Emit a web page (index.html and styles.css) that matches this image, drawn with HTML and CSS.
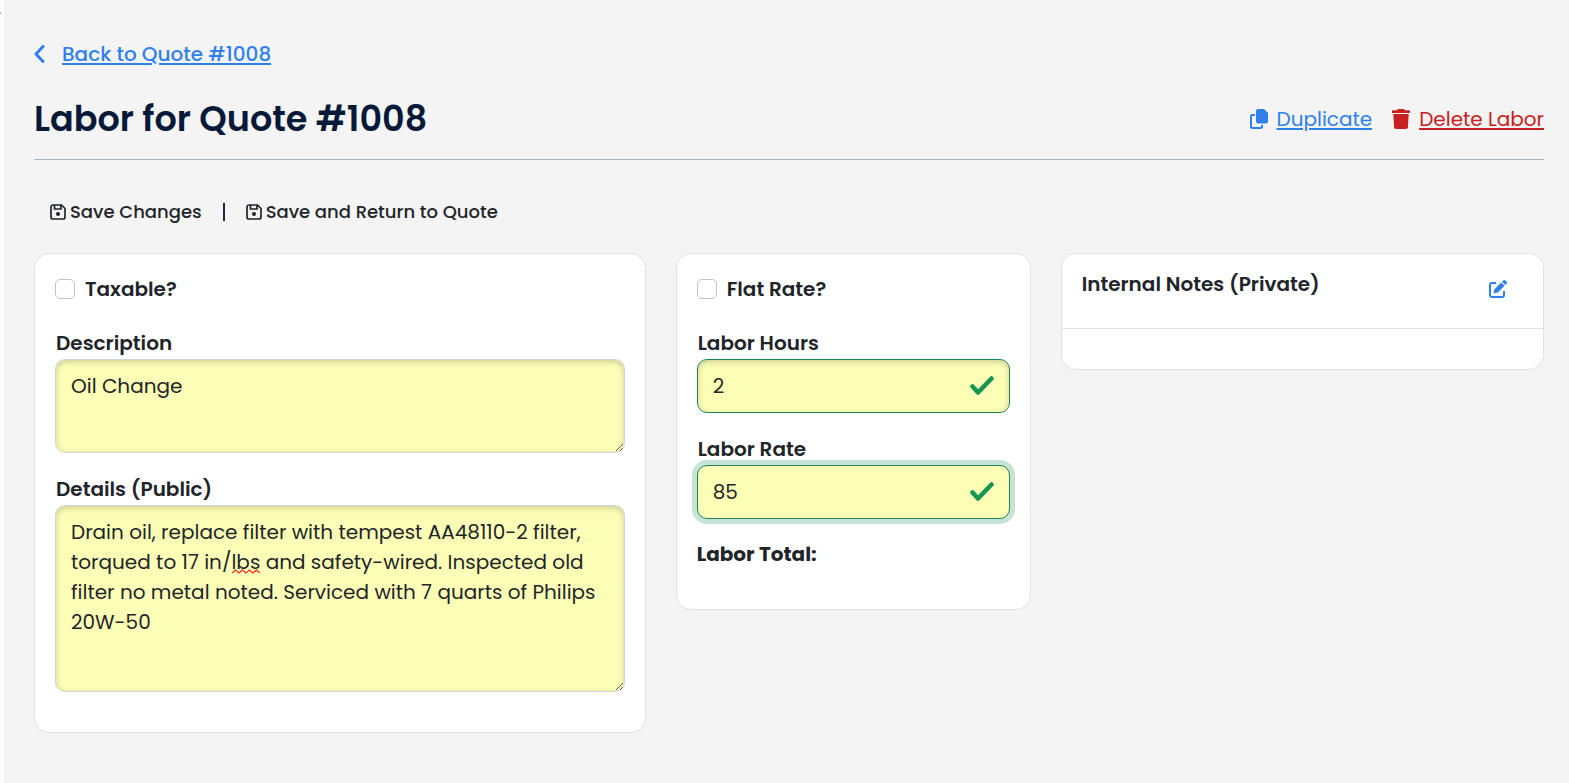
FILE: index.html
```html
<!DOCTYPE html>
<html lang="en">
<head>
    <meta charset="UTF-8">
    <meta name="viewport" content="width=device-width, initial-scale=1.0">
    <title>Labor for Quote #1008</title>
    <link rel="stylesheet" href="styles.css">
</head>
<body>
    <div class="page">
        <div class="back">
            <svg class="back-icon" viewBox="0 0 12 18"><path d="M9 1.500L2 9L9 16.500"/></svg>
            <a href="#">Back to Quote #1008</a>
        </div>

        <div class="header">
            <h1>Labor for Quote #1008</h1>
            <div class="header-actions">
                <a href="#" class="action">
                    <svg viewBox="0 0 18 20">
                        <path d="M8 0h6l4 4v8.500a2 2 0 0 1-2 2H8a2 2 0 0 1-2-2V2a2 2 0 0 1 2-2z"/>
                        <path class="outline" d="M5 6H2.500A1.500 1.500 0 0 0 1 7.500v10A1.500 1.500 0 0 0 2.500 19h8a1.500 1.500 0 0 0 1.500-1.500V16"/>
                    </svg>
                    <span>Duplicate</span>
                </a>
                <a href="#" class="action action-delete">
                    <svg viewBox="0 0 18 20">
                        <path d="M6 0h6l1 1.300h4a1 1 0 0 1 1 1V4H0V2.300a1 1 0 0 1 1-1h4z"/>
                        <path d="M1.300 5h15.400l-.8 13.200A2 2 0 0 1 14 20H4a2 2 0 0 1-1.900-1.800z"/>
                    </svg>
                    <span>Delete Labor</span>
                </a>
            </div>
        </div>

        <div class="toolbar">
            <button type="button">
                <svg viewBox="0 0 16 16">
                    <path d="M3 1h8.500L15 4.500V13a2 2 0 0 1-2 2H3a2 2 0 0 1-2-2V3a2 2 0 0 1 2-2z"/>
                    <path d="M4.500 1v4h6.500V1"/>
                    <circle cx="8" cy="10" r="2"/>
                </svg>
                Save Changes
            </button>
            <span class="divider"></span>
            <button type="button">
                <svg viewBox="0 0 16 16">
                    <path d="M3 1h8.500L15 4.500V13a2 2 0 0 1-2 2H3a2 2 0 0 1-2-2V3a2 2 0 0 1 2-2z"/>
                    <path d="M4.500 1v4h6.500V1"/>
                    <circle cx="8" cy="10" r="2"/>
                </svg>
                Save and Return to Quote
            </button>
        </div>

        <form class="columns">
            <div class="card card-main">
                <div class="check-row">
                    <input type="checkbox" id="taxable">
                    <label for="taxable">Taxable?</label>
                </div>
                <div class="field">
                    <label for="description">Description</label>
                    <textarea id="description" class="short">Oil Change</textarea>
                </div>
                <div class="field">
                    <label for="details">Details (Public)</label>
                    <textarea id="details" class="tall">Drain oil, replace filter with tempest AA48110-2 filter, torqued to 17 in/lbs and safety-wired. Inspected old filter no metal noted. Serviced with 7 quarts of Philips 20W-50</textarea>
                    <svg class="misspelled" viewBox="0 0 28 5"><path d="M0 4l3.500-3 3.500 3 3.500-3 3.500 3 3.500-3 3.500 3 3.500-3 3.500 3"/></svg>
                </div>
            </div>

            <div class="card card-rate">
                <div class="check-row">
                    <input type="checkbox" id="flatRate">
                    <label for="flatRate">Flat Rate?</label>
                </div>
                <div class="field">
                    <label for="hours">Labor Hours</label>
                    <input type="text" id="hours" value="2">
                    <svg class="valid" viewBox="0 0 24 20"><path d="M2.500 10.500L8 16.500L21.500 2.500"/></svg>
                </div>
                <div class="field">
                    <label for="rate">Labor Rate</label>
                    <input type="text" id="rate" class="focused" value="85">
                    <svg class="valid" viewBox="0 0 24 20"><path d="M2.500 10.500L8 16.500L21.500 2.500"/></svg>
                </div>
                <p class="total">Labor Total:</p>
            </div>

            <div class="card card-notes">
                <div class="notes-header">
                    <h2>Internal Notes (Private)</h2>
                    <button type="button" aria-label="Edit notes">
                        <svg viewBox="0 0 18 18">
                            <path class="outline" d="M7 3H3a2 2 0 0 0-2 2v10a2 2 0 0 0 2 2h10a2 2 0 0 0 2-2v-4"/>
                            <path d="M12.200 2.500l3.300 3.300-6.700 6.700-4.300 1 1-4.300z"/>
                            <path d="M13 1.700l1-1a2 2 0 0 1 2.700 0l.6.6a2 2 0 0 1 0 2.700l-1 1z"/>
                        </svg>
                    </button>
                </div>
                <div class="notes-body"></div>
            </div>
        </form>
    </div>
</body>
</html>
```
FILE: styles.css
```css
* {
    box-sizing: border-box;
}
body {
    margin: 0;
    background-color: #f4f4f4;
    color: #212529;
    font-family: Poppins, Inter, sans-serif;
    font-size: 20px;
    line-height: 30px;
}
.page {
    min-height: 100vh;
    padding: 39px 25px 30px 30px;
    border-left: 4px solid #fcfcfc;
}
/* end of the sidebar rule */
.page::before {
    content: "";
    position: absolute;
    top: 12px;
    left: 0;
    width: 1px;
    height: 2px;
    background-color: #b5b5b5;
}
a {
    color: #2f80ed;
    text-decoration-thickness: 2px;
    text-underline-offset: 2px;
}
h1, h2, p {
    margin: 0;
}
button {
    padding: 0;
    border: none;
    background: none;
    color: inherit;
    font: inherit;
    cursor: pointer;
}
.back {
    display: flex;
    align-items: center;
    gap: 16px;
}
.back a {
    font-weight: 500;
}
.back-icon {
    width: 12px;
    height: 18px;
    fill: none;
    stroke: #2f80ed;
    stroke-width: 3;
    stroke-linecap: round;
    stroke-linejoin: round;
}
.header {
    display: flex;
    justify-content: space-between;
    align-items: center;
    margin-top: 20px;
    padding-bottom: 11px;
    border-bottom: 1px solid #a7b3c9;
}
h1 {
    color: #061938;
    font-size: 35px;
    font-weight: 600;
    line-height: 59px;
}
.header-actions {
    display: flex;
    gap: 20px;
}
.action {
    display: flex;
    align-items: center;
    gap: 9px;
    text-decoration: none;
}
.action span {
    text-decoration: underline;
    text-decoration-thickness: 2px;
}
.action svg {
    width: 18px;
    height: 20px;
    fill: #2f80ed;
}
.action .outline {
    fill: none;
    stroke: #2f80ed;
    stroke-width: 2;
}
.action-delete {
    color: #c82020;
}
.action-delete svg {
    fill: #c82020;
}
.toolbar {
    display: flex;
    align-items: center;
    margin: 37px 0 26px;
    padding-left: 16px;
    font-size: 18px;
    font-weight: 500;
}
.toolbar button {
    display: flex;
    align-items: center;
    gap: 4px;
}
.toolbar svg {
    width: 16px;
    height: 16px;
    fill: none;
    stroke: #212529;
    stroke-width: 1.7;
}
.toolbar circle {
    fill: #212529;
    stroke: none;
}
.divider {
    width: 2px;
    height: 18px;
    margin: 0 21px;
    background-color: #1e2a55;
}
.columns {
    display: grid;
    grid-template-columns: repeat(12, 1fr);
    align-items: start;
    gap: 30px;
}
.card {
    padding: 20px;
    background-color: #fff;
    border: 1px solid #dee2e6;
    border-radius: 15px;
}
.card-main {
    grid-column: span 5;
}
.card-rate {
    grid-column: span 3;
}
.card-notes {
    grid-column: span 4;
    padding: 0;
}
label {
    font-weight: 600;
}
.check-row {
    display: flex;
    align-items: center;
    gap: 10px;
    margin-bottom: 23px;
}
.check-row input {
    appearance: none;
    width: 20px;
    height: 20px;
    margin: 0;
    background-color: #fff;
    border: 1px solid #bfc4ca;
    border-radius: 5px;
}
.field {
    position: relative;
    margin-bottom: 20px;
}
.field label {
    display: block;
    padding: 1px 0 1px 1px;
}
.field textarea,
.field input {
    display: block;
    width: 100%;
    padding: 11px 15px;
    background-color: #fdffb6;
    border: 1px solid #ced4da;
    border-radius: 10px;
    box-shadow: inset 0 2px 6px rgba(0, 0, 0, 0.2);
    color: #212529;
    font: inherit;
    outline: none;
}
.field input {
    height: 54px;
    border-color: #198754;
}
.field .focused {
    box-shadow: 0 0 0 5px #c5e4d3;
}
.field .short {
    height: 94px;
}
.field .tall {
    height: 187px;
}
.valid {
    position: absolute;
    right: 16px;
    bottom: 17px;
    width: 24px;
    height: 20px;
    fill: none;
    stroke: #169552;
    stroke-width: 4.5;
    stroke-linecap: round;
    stroke-linejoin: round;
}
.misspelled {
    position: absolute;
    top: 96px;
    left: 177px;
    width: 28px;
    height: 5px;
    fill: none;
    stroke: #ff2a20;
    stroke-width: 1.3;
}
.total {
    margin-bottom: 20px;
    font-weight: 700;
}
.notes-header {
    display: flex;
    justify-content: space-between;
    align-items: flex-start;
    padding: 15px 20px;
    border-bottom: 1px solid #dee2e6;
}
.notes-header h2 {
    font-size: 20px;
    font-weight: 600;
}
.notes-header button {
    width: 50px;
    height: 44px;
}
.notes-header svg {
    width: 18px;
    height: 18px;
    fill: #2f80ed;
}
.notes-header .outline {
    fill: none;
    stroke: #2f80ed;
    stroke-width: 2;
}
.notes-body {
    height: 40px;
}
```
